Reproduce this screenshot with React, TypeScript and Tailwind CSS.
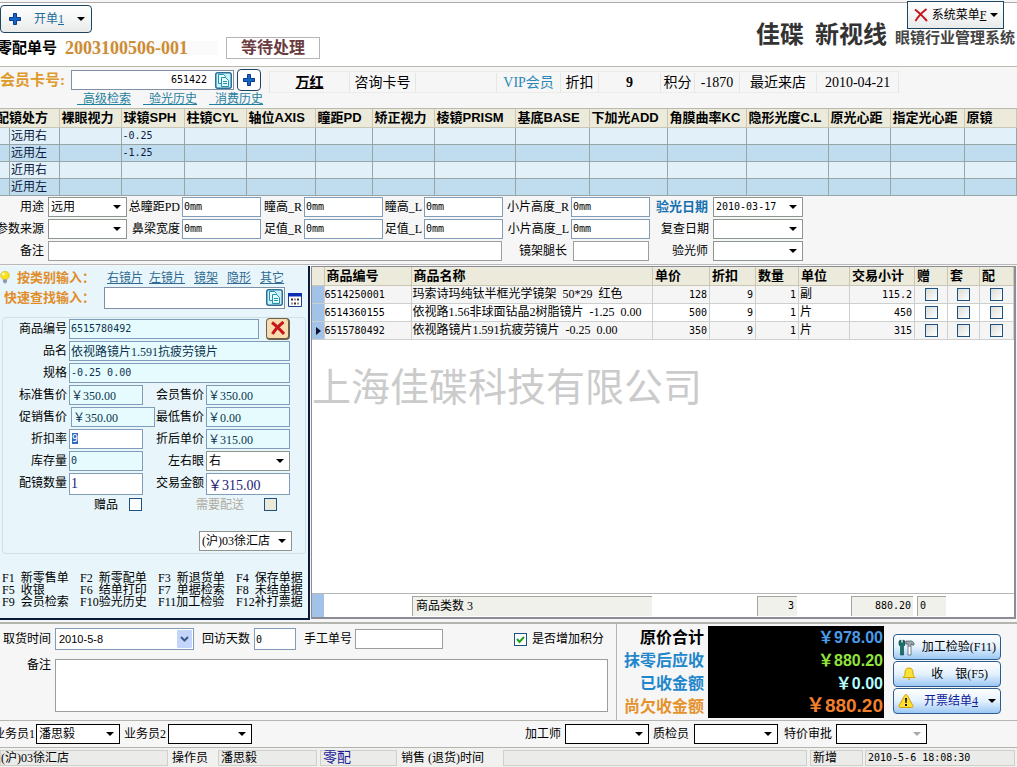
import type { FC, ReactNode } from "react";

import clsx from "clsx";

const MONO = "font-['DejaVu_Sans_Mono','Noto_Sans_CJK_SC',monospace] text-[10px]";

interface InputProps {
  id: string;
  label: string;
  value?: string;
  className?: string;
  readOnly?: boolean;
}

const TextInput: FC<InputProps> = ({ id, label, value = "", className, readOnly }) => (
  <input
    id={id}
    aria-label={label}
    defaultValue={value}
    readOnly={readOnly}
    className={clsx("h-5 min-w-0 border px-px outline-none", className)}
  />
);

interface SelectProps {
  id: string;
  label: string;
  value?: string;
  className?: string;
  border?: string;
  arrow?: string;
}

const Select: FC<SelectProps> = ({ id, label, value = "", className, border = "border-[#8d958f]", arrow = "#000" }) => (
  <div className={clsx("relative h-5", className)}>
    <select
      id={id}
      aria-label={label}
      className={clsx("h-full w-full appearance-none border bg-white pl-[2px] outline-none", border)}
    >
      <option>{value}</option>
    </select>
    <svg viewBox="0 0 8 4" className="pointer-events-none absolute right-[6px] top-2 h-1 w-2">
      <path d="M0 0h8L4 4z" fill={arrow} />
    </svg>
  </div>
);

const Label: FC<{ htmlFor: string; className?: string; children: ReactNode }> = ({ htmlFor, className, children }) => (
  <label htmlFor={htmlFor} className={clsx("flex items-center justify-end whitespace-nowrap", className)}>
    {children}
  </label>
);

const Caret: FC = () => (
  <svg viewBox="0 0 8 4" className="h-1 w-2 shrink-0">
    <path d="M0 0h8L4 4z" fill="#000" />
  </svg>
);

const PlusIcon: FC = () => (
  <svg viewBox="0 0 12 12" className="size-3 shrink-0">
    <path d="M4.5.5h3v4h4v3h-4v4h-3v-4h-4v-3h4z" fill="#1565c8" stroke="#0a3a8c" />
  </svg>
);

const CopyIcon: FC = () => (
  <svg viewBox="0 0 17 17" className="size-[17px] shrink-0">
    <rect x=".75" y=".75" width="15.5" height="15.5" rx="2" fill="#c9f3fa" stroke="#2b6f95" strokeWidth="1.5" />
    <path d="M3.500 2.500h5l2 2v7h-7z" fill="#e8fdff" stroke="#1f93ad" />
    <path d="M6.500 5.500h4l3 3v6h-7z" fill="#e8fdff" stroke="#1f93ad" />
    <path d="M8 9.500h4M8 11.500h4" stroke="#1f93ad" />
  </svg>
);

const BulbIcon: FC = () => (
  <svg viewBox="0 0 10 13" className="h-[13px] w-[10px] shrink-0">
    <circle cx="5" cy="4.500" r="4.300" fill="#fbe01c" stroke="#c9a800" strokeWidth=".5" />
    <circle cx="3.500" cy="3" r="1.500" fill="#fffbc0" />
    <path d="M3 8.500h4v3H5.500v1.500h-1v-1.500H3z" fill="#8a96b0" />
  </svg>
);

const CalendarIcon: FC = () => (
  <svg viewBox="0 0 14 14" className="size-[14px] shrink-0">
    <path d="M.5.5h13v13H.5z" fill="#fff" stroke="#1d3f8f" />
    <path d="M0 0h14v3.500H0z" fill="#0b2fb0" />
    <path d="M3 5.500h2v2H3zM9 5.500h2v2H9zM6 9.500h2v2H6z" fill="#333" />
    <path d="M6 5.500h2v2H6zM3 9.500h2v2H3zM9 9.500h2v2H9z" fill="#a68b8b" />
  </svg>
);

const CrossIcon: FC<{ strokeWidth?: number }> = ({ strokeWidth = 2 }) => (
  <svg viewBox="0 0 14 14" className="size-[14px] shrink-0">
    <path
      d="M1 1.500c4 3 8 7 12 11.500M12.500 1C8 4.500 4 8.500 1.500 13"
      fill="none"
      stroke="#c5161d"
      strokeWidth={strokeWidth}
    />
  </svg>
);

const ToolsIcon: FC = () => (
  <svg viewBox="0 0 17 17" className="size-[17px] shrink-0">
    <path d="M1 2l2-1v3h2V1l2 1v4L5.500 7.500V16H2.500V7.500L1 6z" fill="#16746c" stroke="#0c3f42" strokeWidth=".6" />
    <path d="M8 2h6l2 2v2h-2V5h-1v11h-3V5H8z" fill="#9fa9b2" stroke="#46515c" strokeWidth=".7" />
    <path d="M10.500 8h2v7.500h-2z" fill="#fff" />
  </svg>
);

const BellIcon: FC = () => (
  <svg viewBox="0 0 14 14" className="size-[14px] shrink-0">
    <path d="M7 1c3 0 4 2 4 5 0 2 .5 3 2 4.500H1C2.500 9 3 8 3 6c0-3 1-5 4-5z" fill="#fbe23a" stroke="#d9a400" />
    <path d="M5.500 11.500h3L7 13.500z" fill="#d9a400" />
  </svg>
);

const WarningIcon: FC = () => (
  <svg viewBox="0 0 16 16" className="size-4 shrink-0">
    <path
      d="M8 1.500c.7 0 1 .4 1.400 1l5.400 10c.6 1.200 0 2-1.200 2H2.400c-1.200 0-1.800-.8-1.200-2l5.400-10c.4-.6.700-1 1.400-1z"
      fill="#fde02e"
      stroke="#d3a007"
    />
    <path d="M7 5h2l-.4 5H7.400zM7 11h2v2H7z" fill="#111" />
  </svg>
);

const prescriptionColumns = [
  { name: "配镜处方", width: "w-[59px]" },
  { name: "裸眼视力", width: "w-[62px]" },
  { name: "球镜SPH", width: "w-[63px]" },
  { name: "柱镜CYL", width: "w-[62px]" },
  { name: "轴位AXIS", width: "w-[69px]" },
  { name: "瞳距PD", width: "w-[57px]" },
  { name: "矫正视力", width: "w-[62px]" },
  { name: "棱镜PRISM", width: "w-[81px]" },
  { name: "基底BASE", width: "w-[74px]" },
  { name: "下加光ADD", width: "w-[78px]" },
  { name: "角膜曲率KC", width: "w-[79px]" },
  { name: "隐形光度C.L", width: "w-[82px]" },
  { name: "原光心距", width: "w-[62px]" },
  { name: "指定光心距", width: "w-[74px]" },
  { name: "原镜", width: "" },
];

const prescriptionRows = [
  { name: "远用右", sph: "-0.25" },
  { name: "远用左", sph: "-1.25" },
  { name: "近用右", sph: "" },
  { name: "近用左", sph: "" },
];

const productColumns = [
  { name: "商品编号", width: "w-[87px]" },
  { name: "商品名称", width: "" },
  { name: "单价", width: "w-[57px]" },
  { name: "折扣", width: "w-[46px]" },
  { name: "数量", width: "w-[43px]" },
  { name: "单位", width: "w-[51px]" },
  { name: "交易小计", width: "w-[65px]" },
  { name: "赠", width: "w-[33px]" },
  { name: "套", width: "w-8" },
  { name: "配", width: "w-[34px]" },
];

const products = [
  { code: "6514250001", name: "玛索诗玛纯钛半框光学镜架  50*29  红色", price: "128", unit: "副", total: "115.2" },
  { code: "6514360155", name: "依视路1.56非球面钻晶2树脂镜片  -1.25  0.00", price: "500", unit: "片", total: "450" },
  { code: "6515780492", name: "依视路镜片1.591抗疲劳镜片  -0.25  0.00", price: "350", unit: "片", total: "315" },
];

const shortcuts = [
  "F1  新零售单", "F2  新零配单", "F3  新退货单", "F4  保存单据",
  "F5  收银", "F6  结单打印", "F7  单据检索", "F8  未结单据",
  "F9  会员检索", "F10验光历史", "F11加工检验", "F12补打票据",
];

const Header: FC = () => (
  <header className="flex h-16 justify-between border-t border-[#aaa] bg-white">
    <div className="pt-[2px]">
      <button className="flex h-7 w-[92px] items-center justify-between rounded-sm border border-[#1e4560] bg-linear-to-b from-white to-[#e9ebeb] pl-2 pr-[6px] text-[#1c6c9c]">
        <PlusIcon />
        <span>
          开单<u>1</u>
        </span>
        <Caret />
      </button>
      <div className="flex h-[30px] items-center">
        <span className="-ml-[3px] w-[60px] whitespace-nowrap text-[15px] font-bold">零配单号</span>
        <span className="ml-2 w-[153px] bg-[#fafafa] text-[18px] font-bold text-[#cd8c33]">2003100506-001</span>
        <span className="ml-2 flex h-[22px] w-[94px] items-center justify-center border border-[#b5b5b5] text-base font-bold text-[#6a3c40]">
          等待处理
        </span>
      </div>
    </div>
    <div className="flex">
      <h1 className="mr-2 mt-[14px] flex h-8 items-center whitespace-pre font-['Noto_Sans_CJK_SC',sans-serif] text-[24px] font-bold text-[#333]">
        佳碟  新视线
      </h1>
      <div className="-mt-[2px] flex w-[122px] flex-col">
        <button className="ml-3 flex h-7 w-[97px] items-center justify-between border border-[#1e4560] bg-linear-to-b from-white to-[#e9ebeb] pl-[6px] pr-[5px]">
          <CrossIcon />
          <span>
            系统菜单<u>F</u>
          </span>
          <Caret />
        </button>
        <span className="whitespace-nowrap font-['Noto_Sans_CJK_SC',sans-serif] text-[15px] font-bold leading-4 text-[#444]">
          眼镜行业管理系统
        </span>
      </div>
    </div>
  </header>
);

const InfoCell: FC<{ className?: string; children?: ReactNode }> = ({ className, children }) => (
  <div className={clsx("flex h-5 items-center justify-center whitespace-nowrap border-r border-[#e6e6e2]", className)}>
    {children}
  </div>
);

const MemberBar: FC = () => (
  <section className="flex h-[43px] border-y border-[#b9b9ae] bg-[#f6f6f6]">
    <div className="pt-[2px]">
      <div className="flex items-center">
        <label htmlFor="card" className="w-[71px] whitespace-nowrap text-[15px] font-bold text-[#df9a2c]">
          会员卡号:
        </label>
        <div className="flex h-5 w-[163px] items-center border border-[#7f8fa6] bg-white pr-px">
          <input id="card" defaultValue="651422" className={clsx("w-full min-w-0 pr-2 text-right outline-none", MONO)} />
          <button aria-label="复制">
            <CopyIcon />
          </button>
        </div>
        <button
          aria-label="新增会员"
          className="ml-[3px] flex h-[22px] w-6 items-center justify-center rounded-sm border border-[#1e4560] bg-white"
        >
          <PlusIcon />
        </button>
      </div>
      <div className="ml-[77px] mt-px flex gap-3 whitespace-pre text-[#1f7f9f] underline">
        <a href="#search">{"  高级检索"}</a>
        <a href="#optometry">{"  验光历史"}</a>
        <a href="#purchases">{"  消费历史"}</a>
      </div>
    </div>
    <div className="ml-[6px] mt-1 flex h-[22px] border-y border-[#ecece8] pt-px text-sm">
      <InfoCell className="w-[81px] border-l font-bold underline">万红</InfoCell>
      <InfoCell className="w-[66px]">咨询卡号</InfoCell>
      <InfoCell className="w-[81px]" />
      <InfoCell className="w-16 text-[#2a87b4]">VIP会员</InfoCell>
      <InfoCell className="w-[38px]">折扣</InfoCell>
      <InfoCell className="w-[62px] font-bold">9</InfoCell>
      <InfoCell className="w-[34px]">积分</InfoCell>
      <InfoCell className="w-[45px]">-1870</InfoCell>
      <InfoCell className="w-[77px]">最近来店</InfoCell>
      <InfoCell className="w-[82px]">2010-04-21</InfoCell>
    </div>
  </section>
);

const PrescriptionTable: FC = () => (
  <table className="w-full table-fixed border-collapse">
    <thead>
      <tr className="h-[18px] bg-[#ebeadb]">
        {prescriptionColumns.map(({ name, width }, index) => (
          <th
            key={name}
            className={clsx(
              "overflow-hidden whitespace-nowrap border-r border-b border-[#c9c7b4] p-0 text-left font-['Liberation_Sans','Noto_Sans_CJK_SC',sans-serif] text-[13px] leading-[17px]",
              width,
              index > 0 && "pl-[2px]",
            )}
          >
            <span className={clsx(index === 0 && "-ml-1")}>{name}</span>
          </th>
        ))}
      </tr>
    </thead>
    <tbody>
      {prescriptionRows.map((row) => (
        <tr key={row.name} className="h-[17px] bg-[#e2f0f9] even:bg-[#c0dcef]">
          {prescriptionColumns.map(({ name }, index) => (
            <td key={name} className="border-r border-b border-[#98a5a6] p-0 leading-4">
              {index === 0 && (
                <div className="ml-[9px] whitespace-nowrap border-l border-[#98a5a6] pl-px text-[#0b1a40]">{row.name}</div>
              )}
              {index === 2 && <div className={clsx("pl-px text-[#0b1a40]", MONO)}>{row.sph}</div>}
            </td>
          ))}
        </tr>
      ))}
    </tbody>
  </table>
);

const MeasureField: FC<{ id: string; label: string }> = ({ id, label }) => (
  <>
    <Label htmlFor={id} className="pr-[2px]">
      {label}
    </Label>
    <TextInput id={id} label={label} value="0mm" className={clsx("border-[#7f9db9] bg-white", MONO)} />
  </>
);

const PrescriptionForm: FC = () => (
  <section className="grid h-[69px] auto-rows-[20px] grid-cols-[48px_79px_55px_79px_43px_79px_41px_79px_68px_79px_63px_90px] gap-y-[2px] border-b border-[#b9b9b9] pt-px">
    <Label htmlFor="usage" className="pr-1">用途</Label>
    <Select id="usage" label="用途" value="远用" />
    <MeasureField id="pd" label="总瞳距PD" />
    <MeasureField id="height-r" label="瞳高_R" />
    <MeasureField id="height-l" label="瞳高_L" />
    <MeasureField id="segment-r" label="小片高度_R" />
    <Label htmlFor="exam-date" className="pr-[5px] text-[13px] font-bold text-[#1470b0]">验光日期</Label>
    <Select id="exam-date" label="验光日期" value="2010-03-17" className={MONO} />
    <Label htmlFor="source" className="pr-1">参数来源</Label>
    <Select id="source" label="参数来源" />
    <MeasureField id="bridge" label="鼻梁宽度" />
    <MeasureField id="foot-r" label="足值_R" />
    <MeasureField id="foot-l" label="足值_L" />
    <MeasureField id="segment-l" label="小片高度_L" />
    <Label htmlFor="recheck" className="pr-1">复查日期</Label>
    <Select id="recheck" label="复查日期" />
    <Label htmlFor="rx-note" className="pr-1">备注</Label>
    <TextInput id="rx-note" label="备注" className="col-span-7 mr-px border-[#9a9f9a] bg-white" />
    <Label htmlFor="temple" className="pr-1">镜架腿长</Label>
    <TextInput id="temple" label="镜架腿长" className="ml-[2px] mr-px border-[#9a9f9a] bg-white" />
    <Label htmlFor="optician" className="pr-[5px]">验光师</Label>
    <Select id="optician" label="验光师" />
  </section>
);

const FIELD = "border-[#7f9db9] bg-[#e5fbfd] text-[#0d3350]";

const EntryPanel: FC = () => (
  <aside className="flex w-[310px] shrink-0 flex-col border-b-2 border-r-2 border-[#0a1a3a] bg-[#e8f6fb] pt-[3px]">
    <div className="flex h-[18px] items-center">
      <BulbIcon />
      <span className="ml-[7px] w-[90px] whitespace-nowrap text-[13px] font-bold text-[#e08d2a]">按类别输入：</span>
      <nav className="flex gap-[6px] whitespace-nowrap text-[#2f6a94] underline">
        <a href="#right">右镜片</a>
        <a href="#left">左镜片</a>
        <a href="#frame" className="ml-[3px]">镜架</a>
        <a href="#contact" className="ml-[3px]">隐形</a>
        <a href="#other" className="ml-[3px]">其它</a>
      </nav>
    </div>
    <div className="flex h-[22px] items-center">
      <label htmlFor="quick" className="w-[104px] whitespace-nowrap pl-1 text-[13px] font-bold text-[#e08d2a]">
        快速查找输入：
      </label>
      <div className="flex h-[22px] w-[181px] items-center border border-[#7f8fa6] bg-white pr-px">
        <input id="quick" className="w-full min-w-0 px-1 outline-none" />
        <button aria-label="检索">
          <CopyIcon />
        </button>
      </div>
      <button aria-label="日历" className="ml-[3px] pt-1">
        <CalendarIcon />
      </button>
    </div>
    <div className="mx-[2px] mt-2 flex h-[237px] flex-col rounded-sm border border-[#cfe0e8] pt-px">
      <div className="grid auto-rows-[20px] grid-cols-[66px_74px_63px_84px] gap-y-[2px]">
        <Label htmlFor="code" className="pr-[2px]">商品编号</Label>
        <div className="col-span-3 flex justify-between">
          <TextInput id="code" label="商品编号" value="6515780492" className={clsx("w-[190px]", FIELD, MONO)} readOnly />
          <button
            aria-label="删除"
            className="-mt-px flex h-[22px] w-6 items-center justify-center rounded-sm border border-r-2 border-b-2 border-[#6d6048] bg-[#f6dcae]"
          >
            <CrossIcon strokeWidth={3} />
          </button>
        </div>
        <Label htmlFor="name" className="pr-[2px]">品名</Label>
        <TextInput id="name" label="品名" value="依视路镜片1.591抗疲劳镜片" className={clsx("col-span-3", FIELD)} readOnly />
        <Label htmlFor="spec" className="pr-[2px]">规格</Label>
        <TextInput id="spec" label="规格" value="-0.25 0.00" className={clsx("col-span-3", FIELD, MONO)} readOnly />
        <Label htmlFor="standard" className="pr-[2px]">标准售价</Label>
        <TextInput id="standard" label="标准售价" value="￥350.00" className={FIELD} readOnly />
        <Label htmlFor="member" className="pr-[2px]">会员售价</Label>
        <TextInput id="member" label="会员售价" value="￥350.00" className={FIELD} readOnly />
        <Label htmlFor="promo" className="pr-[2px]">促销售价</Label>
        <TextInput id="promo" label="促销售价" value="￥350.00" className={clsx("ml-[2px] -mr-3", FIELD)} readOnly />
        <Label htmlFor="lowest" className="pr-[2px]">最低售价</Label>
        <TextInput id="lowest" label="最低售价" value="￥0.00" className={FIELD} readOnly />
        <Label htmlFor="rate" className="pr-[2px]">折扣率</Label>
        <input
          id="rate"
          defaultValue="9"
          autoFocus
          ref={(node) => node?.select()}
          className={clsx(
            "h-5 min-w-0 border border-[#7f9db9] bg-white px-[2px] outline-none selection:bg-[#316ac5] selection:text-white",
            MONO,
          )}
        />
        <Label htmlFor="net" className="pr-[2px]">折后单价</Label>
        <TextInput id="net" label="折后单价" value="￥315.00" className={FIELD} readOnly />
        <Label htmlFor="stock" className="pr-[2px]">库存量</Label>
        <TextInput id="stock" label="库存量" value="0" className={clsx(FIELD, MONO)} readOnly />
        <Label htmlFor="eye" className="pr-[2px]">左右眼</Label>
        <Select id="eye" label="左右眼" value="右" />
        <Label htmlFor="count" className="pr-[2px]">配镜数量</Label>
        <TextInput id="count" label="配镜数量" value="1" className="h-[22px] border-[#7f9db9] bg-white text-[14px] text-[#1c1c78]" />
        <Label htmlFor="amount" className="pr-[2px]">交易金额</Label>
        <TextInput id="amount" label="交易金额" value="￥315.00" className="h-[22px] border-[#7f9db9] bg-white text-[14px] text-[#1c1c78]" />
      </div>
      <div className="mt-1 flex h-4 items-center">
        <Label htmlFor="gift" className="w-[115px]">赠品</Label>
        <input id="gift" type="checkbox" className="ml-[11px] size-[13px] appearance-none border border-[#1c5180] bg-white" />
        <Label htmlFor="delivery" className="ml-[54px] text-[#b0aa9f]">需要配送</Label>
        <input id="delivery" type="checkbox" disabled className="ml-5 size-[13px] appearance-none border border-[#1c5180] bg-[#ece9d8]" />
      </div>
      <Select id="store" label="门店" value="(沪)03徐汇店" className="mb-[2px] ml-auto mr-[13px] mt-auto w-[93px]" />
    </div>
    <ul className="mt-auto mb-[10px] grid auto-rows-[12px] grid-cols-[78px_78px_78px_1fr] pl-[2px] leading-3">
      {shortcuts.map((item) => (
        <li key={item} className="whitespace-pre">
          {item}
        </li>
      ))}
    </ul>
  </aside>
);

const ProductGrid: FC = () => (
  <section className="mx-px mb-px flex min-w-0 flex-1 flex-col border-2 border-t border-l border-[#8c8c96] bg-white">
    <table className="w-full table-fixed border-collapse">
      <thead>
        <tr className="h-[19px] bg-[#ebeadb]">
          <th className="w-3 border-r border-b border-[#c9c7b4] p-0" />
          {productColumns.map(({ name, width }) => (
            <th
              key={name}
              className={clsx(
                "whitespace-nowrap border-r border-b border-[#c9c7b4] p-0 pl-[2px] text-left text-[13px] leading-[17px]",
                width,
              )}
            >
              {name}
            </th>
          ))}
        </tr>
      </thead>
      <tbody>
        {products.map((row, index) => (
          <tr
            key={row.code}
            className="h-[18px] odd:bg-[#f5f5f5] last:bg-[#e9f3fb] [&>td]:overflow-hidden [&>td]:border-r [&>td]:border-b [&>td]:border-[#cdd0cf] [&>td]:p-0 [&>td]:leading-[17px]"
          >
            <td className="bg-[#a3c2e8]">
              {index === 2 && (
                <svg viewBox="0 0 5 8" className="ml-1 h-2 w-[5px]">
                  <path d="M0 0l5 4-5 4z" fill="#0a1030" />
                </svg>
              )}
            </td>
            <td>
              <span className={MONO}>{row.code}</span>
            </td>
            <td>
              <div className="mr-[2px] overflow-hidden whitespace-pre pl-px">{row.name}</div>
            </td>
            <td className="text-right">
              <span className={clsx("pr-[2px]", MONO)}>{row.price}</span>
            </td>
            <td className="text-right">
              <span className={clsx("pr-[2px]", MONO)}>9</span>
            </td>
            <td className="text-right">
              <span className={clsx("pr-[2px]", MONO)}>1</span>
            </td>
            <td>
              <span className="pl-px">{row.unit}</span>
            </td>
            <td className="text-right">
              <span className={clsx("pr-[2px]", MONO)}>{row.total}</span>
            </td>
            {["赠", "套", "配"].map((name) => (
              <td key={name}>
                <input
                  type="checkbox"
                  aria-label={name}
                  className="mx-auto block size-[13px] appearance-none border border-[#1c5180] bg-linear-to-br from-[#dcdcd7] to-white"
                />
              </td>
            ))}
          </tr>
        ))}
      </tbody>
    </table>
    <p className="mt-4 whitespace-nowrap font-['Noto_Sans_CJK_SC',sans-serif] text-[39px] leading-[56px] text-[#cbcbcb]">
      上海佳碟科技有限公司
    </p>
    <div className="mt-auto flex h-6 items-center border-t border-[#b5b5b5] [&>output]:flex [&>output]:h-5 [&>output]:items-center [&>output]:border-t [&>output]:border-l [&>output]:border-[#a5a5a0] [&>output]:bg-[#f1f1ec]">
      <div className="h-full w-3 bg-[#a3c2e8]" />
      <output className="ml-[88px] w-[240px] pl-[3px]">商品类数 3</output>
      <output className={clsx("ml-auto w-10 justify-end pr-[3px]", MONO)}>3</output>
      <output className={clsx("ml-[54px] w-[62px] justify-end pr-[2px]", MONO)}>880.20</output>
      <output className={clsx("ml-1 mr-[68px] w-[29px] pl-[2px]", MONO)}>0</output>
    </div>
  </section>
);

const ACTION =
  "flex h-[26px] w-[108px] items-center justify-between rounded-sm border border-[#2c5c8c] bg-linear-to-b from-white via-[#e4f1fd] to-[#9cc8f4] px-1 whitespace-nowrap";

const Checkout: FC = () => (
  <section className="flex h-[98px] border-y border-[#b5b5b0] bg-[#f6f6f6]">
    <div className="flex min-w-0 flex-1 flex-col border-r border-[#b5b5b0] pr-2">
      <div className="flex h-[26px] items-center pt-1">
        <Label htmlFor="pickup" className="w-[51px]">取货时间</Label>
        <div className="relative ml-1 h-[22px] w-[139px]">
          <select
            id="pickup"
            className="h-full w-full appearance-none border border-[#7f9db9] bg-white pl-[3px] font-['Liberation_Sans',sans-serif] text-[11px]"
          >
            <option>2010-5-8</option>
          </select>
          <svg viewBox="0 0 15 18" className="pointer-events-none absolute right-[2px] top-[2px] h-[18px] w-[15px]">
            <rect width="15" height="18" rx="1" fill="#c3d5fb" />
            <path d="M4 7l3.500 3.500L11 7" fill="none" stroke="#3a5a88" strokeWidth="2" />
          </svg>
        </div>
        <Label htmlFor="visit" className="ml-2">回访天数</Label>
        <TextInput
          id="visit"
          label="回访天数"
          value="0"
          className={clsx("ml-1 h-[22px] w-[42px] border-[#7f9db9] bg-white", MONO)}
        />
        <Label htmlFor="manual" className="ml-2">手工单号</Label>
        <TextInput id="manual" label="手工单号" className="ml-[3px] w-[88px] border-[#9a9f9a] bg-white" />
        <label htmlFor="points" className="ml-auto mr-1 flex items-center gap-[5px] whitespace-nowrap">
          <span className="relative size-[13px]">
            <input
              id="points"
              type="checkbox"
              defaultChecked
              className="block size-[13px] appearance-none border border-[#1c5180] bg-white"
            />
            <svg viewBox="0 0 13 13" className="pointer-events-none absolute inset-0">
              <path d="M3 6l2.500 3L10 4" fill="none" stroke="#21a121" strokeWidth="2" />
            </svg>
          </span>
          是否增加积分
        </label>
      </div>
      <div className="mt-[9px] flex">
        <Label htmlFor="note" className="h-3 w-[51px]">备注</Label>
        <textarea id="note" className="ml-1 h-[53px] flex-1 resize-none border border-[#9a9f9a] bg-white outline-none" />
      </div>
    </div>
    <dl className="grid w-[267px] shrink-0 grid-cols-[91px_176px] grid-rows-4 py-[2px] text-base font-bold [&>*]:flex [&>*]:items-center [&>*]:justify-end [&>*]:whitespace-nowrap [&>dd]:bg-black [&>dd]:pr-px [&>dd]:font-['Liberation_Sans','Noto_Sans_CJK_SC',sans-serif] [&>dt]:pr-1">
      <dt>原价合计</dt>
      <dd className="text-[#4a9be8]">￥978.00</dd>
      <dt className="text-[#1f86cc]">抹零后应收</dt>
      <dd className="text-[#92e23c]">￥880.20</dd>
      <dt className="text-[#1f86cc]">已收金额</dt>
      <dd className="text-[#b4fbff]">￥0.00</dd>
      <dt className="text-[#e5922c]">尚欠收金额</dt>
      <dd className="text-[19px] text-[#f07f2c]">￥880.20</dd>
    </dl>
    <div className="ml-[9px] mr-4 flex shrink-0 flex-col gap-px pt-[10px]">
      <button className={ACTION}>
        <ToolsIcon />
        <span>加工检验(F11)</span>
      </button>
      <button className={ACTION}>
        <span className="pl-1">
          <BellIcon />
        </span>
        <span className="whitespace-pre pr-2">{"收    银(F5)"}</span>
      </button>
      <button className={ACTION}>
        <WarningIcon />
        <span className="text-[#10209a]">
          开票结单<u>4</u>
        </span>
        <Caret />
      </button>
    </div>
  </section>
);

const StaffBar: FC = () => (
  <section className="flex h-[27px] items-center border-b border-[#b5b5b0]">
    <Label htmlFor="sales1" className="w-[35px]">业务员1</Label>
    <Select id="sales1" label="业务员1" value="潘思毅" className="ml-px w-[84px]" border="border-black" />
    <Label htmlFor="sales2" className="ml-[3px] w-[43px]">业务员2</Label>
    <Select id="sales2" label="业务员2" className="ml-[2px] w-[84px]" border="border-black" />
    <Label htmlFor="processor" className="ml-auto">加工师</Label>
    <Select id="processor" label="加工师" className="ml-1 w-[84px]" border="border-black" />
    <Label htmlFor="checker" className="ml-1">质检员</Label>
    <Select id="checker" label="质检员" className="ml-[5px] w-[84px]" border="border-black" />
    <Label htmlFor="approval" className="ml-[6px]">特价审批</Label>
    <Select id="approval" label="特价审批" className="ml-1 mr-[90px] w-[91px]" border="border-black" arrow="#aaa" />
  </section>
);

const STATUS_CELL = "flex h-4 items-center whitespace-nowrap border border-[#cfcfcb] bg-[#ebebe9]";

const StatusBar: FC = () => (
  <footer className="flex h-[19px] items-center bg-[#f1f1ef] pr-[2px]">
    <div className={clsx(STATUS_CELL, "w-[168px]")}>(沪)03徐汇店</div>
    <div className="w-[50px] pl-1">操作员</div>
    <div className={clsx(STATUS_CELL, "w-[99px] pl-[2px]")}>潘思毅</div>
    <div className={clsx(STATUS_CELL, "ml-[3px] w-[77px] pl-[2px] text-sm text-[#1c1c98]")}>零配</div>
    <div className="w-[106px] whitespace-nowrap pl-1">销售 (退货)时间</div>
    <div className={clsx(STATUS_CELL, "flex-1")} />
    <div className={clsx(STATUS_CELL, "ml-[3px] w-[53px] pl-[2px]")}>新增</div>
    <div className={clsx(STATUS_CELL, "ml-[2px] w-[150px] pl-[2px]", MONO)}>2010-5-6 18:08:30</div>
  </footer>
);

const App: FC = () => {
  return (
    <main className="flex min-h-screen flex-col overflow-hidden bg-[#f6f6f6] pt-[2px] font-['Liberation_Serif','Noto_Sans_CJK_SC',serif] text-xs leading-[14px] text-black">
      <Header />
      <MemberBar />
      <PrescriptionTable />
      <PrescriptionForm />
      <div className="flex flex-1 border-b border-[#b5b5b0] pt-px pb-[2px]">
        <EntryPanel />
        <ProductGrid />
      </div>
      <Checkout />
      <StaffBar />
      <StatusBar />
    </main>
  );
};

export default App;
